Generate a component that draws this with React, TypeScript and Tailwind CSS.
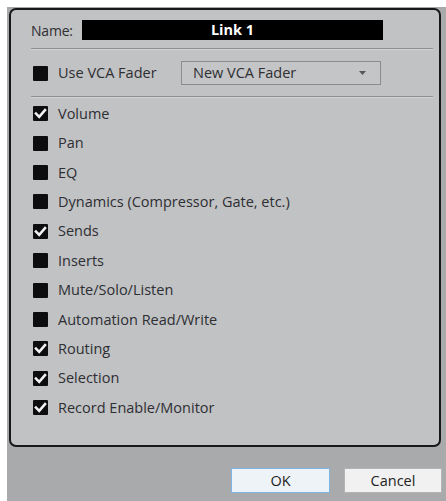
import React from 'react';

const items: { label: string; checked: boolean }[] = [
  { label: 'Volume', checked: true },
  { label: 'Pan', checked: false },
  { label: 'EQ', checked: false },
  { label: 'Dynamics (Compressor, Gate, etc.)', checked: false },
  { label: 'Sends', checked: true },
  { label: 'Inserts', checked: false },
  { label: 'Mute/Solo/Listen', checked: false },
  { label: 'Automation Read/Write', checked: false },
  { label: 'Routing', checked: true },
  { label: 'Selection', checked: true },
  { label: 'Record Enable/Monitor', checked: true },
];

function Check({ checked }: { checked: boolean }) {
  return (
    <svg width="15" height="15" viewBox="0 0 15 15" className="shrink-0">
      <rect x="0" y="0" width="15" height="15" rx="1" fill="#0d0d0f" />
      {checked && (
        <path d="M3 7.6 L6.2 10.8 L12 4.2" fill="none" stroke="#f2f2f2" strokeWidth="2.6" strokeLinecap="square" />
      )}
    </svg>
  );
}

function Separator() {
  return (
    <div className="mr-[6px]">
      <div className="h-px bg-[#8e8f92]" />
      <div className="h-px bg-[#d2d3d5]" />
    </div>
  );
}

export default function App() {
  return (
    <div className="w-[446px] h-[501px] bg-white overflow-hidden font-['Open_Sans',sans-serif] text-[14.5px] text-[#2e2e33]">
      <div className="ml-[7px] mt-[7px] h-[494px] bg-[#a9aaac] pt-px pl-[2px]">
        {/* Settings panel */}
        <div className="w-[432px] h-[439px] bg-[#c1c2c4] border-2 border-[#18181a] rounded-[7px] pt-[10px] pl-[20px]">
          <div className="flex items-center h-[20px]">
            <span className="w-[51px] text-[14px] tracking-[-0.2px]">Name:</span>
            <div className="w-[301px] h-[20px] bg-black text-white font-bold flex items-center justify-center">
              Link 1
            </div>
          </div>

          <div className="mt-[8px]">
            <Separator />
          </div>

          <div className="flex items-center h-[24px] mt-[11px]">
            <div className="ml-[2px]">
              <Check checked={false} />
            </div>
            <span className="ml-[10px] w-[123px]">Use VCA Fader</span>
            <div className="w-[200px] h-[24px] border border-[#8b8c8e] bg-[#c4c5c7] flex items-center justify-between pl-[11px] pr-[14px]">
              <span>New VCA Fader</span>
              <svg width="7" height="4" viewBox="0 0 7 4">
                <path d="M0 0 H7 L3.5 4 Z" fill="#55565a" />
              </svg>
            </div>
          </div>

          <div className="mt-[11px]">
            <Separator />
          </div>

          <div className="flex flex-col pt-px">
            {items.map((it) => (
              <div key={it.label} className="flex items-center h-[29.4px]">
                <div className="ml-[2px]">
                  <Check checked={it.checked} />
                </div>
                <span className="ml-[10px]">{it.label}</span>
              </div>
            ))}
          </div>
        </div>

        {/* Dialog buttons */}
        <div className="flex justify-end gap-[14px] mt-[21px] pr-[4px]">
          <button className="w-[99px] h-[25px] border border-[#7db3e6] bg-[#eef3f8] text-[#222]">OK</button>
          <button className="w-[98px] h-[25px] border border-[#b4b4b4] bg-[#f1f1f1] text-[#222]">Cancel</button>
        </div>
      </div>
    </div>
  );
}
